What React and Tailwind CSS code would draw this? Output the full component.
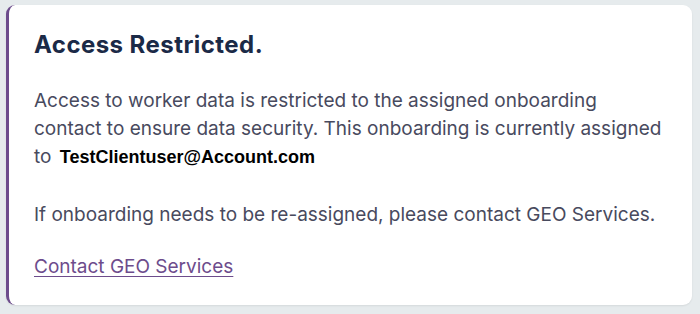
export default function App() {
  return (
    <div className="w-[700px] h-[314px] bg-[#e6ebed] pt-[5px] pl-[6px] pr-[8px] pb-[9px]" style={{ fontFamily: 'Inter, "Noto Sans", sans-serif' }}>
      <div className="h-full bg-white rounded-[9px] border-l-[3px] border-[#6d4c8c] shadow-[0_1px_2px_rgba(0,0,0,0.08)] pl-[25px] pr-[30px] pt-[24px]">
        <h2 className="text-[24px] font-bold text-[#1b2a47] leading-[32px] tracking-[0.45px]">Access Restricted.</h2>
        <p className="mt-[26px] text-[19px] leading-[28px] text-[#484a5e]">
          Access to worker data is restricted to the assigned onboarding contact to ensure data security. This onboarding is currently assigned to{' '}
          <span className="ml-[3px] font-bold text-black text-[18px] leading-[20px]" style={{ fontFamily: '"Liberation Sans", Arial, sans-serif' }}>TestClientuser@Account.com</span>
        </p>
        <p className="mt-[30px] text-[19px] leading-[28px] text-[#484a5e]">
          If onboarding needs to be re-assigned, please contact GEO Services.
        </p>
        <a href="#" className="inline-block mt-[24px] text-[19px] leading-[28px] text-[#6d4c8c] underline underline-offset-[3px]">Contact GEO Services</a>
      </div>
    </div>
  );
}
